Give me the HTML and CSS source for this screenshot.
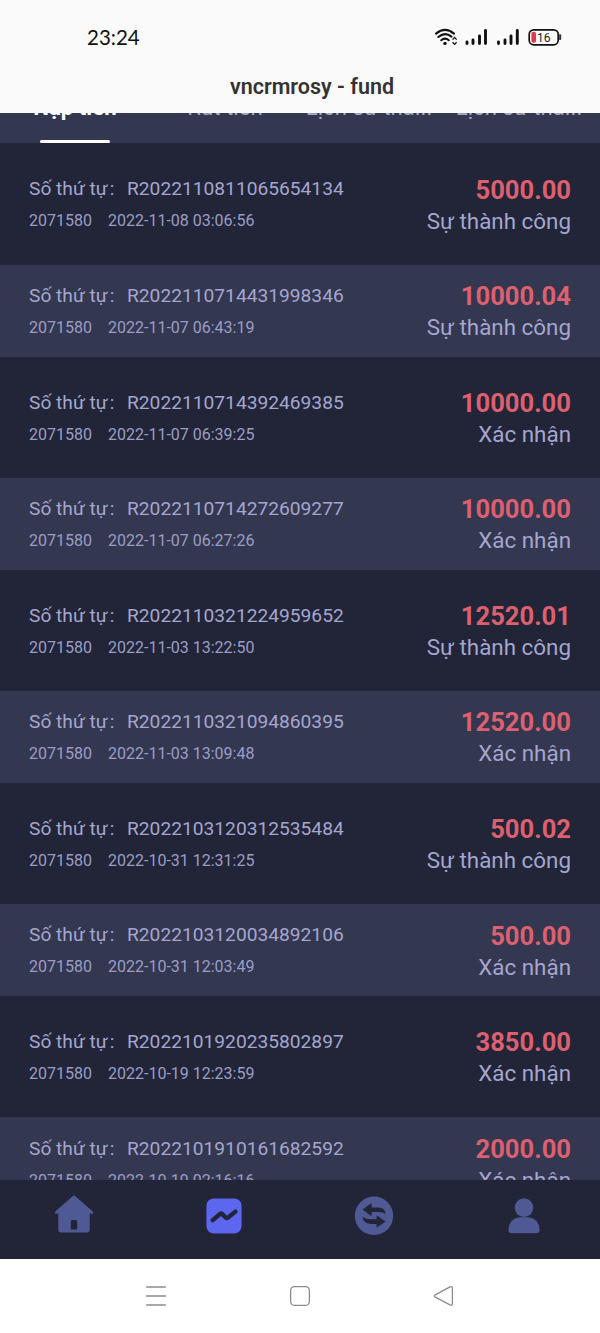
FILE: index.html
```
<!DOCTYPE html>
<html lang="vi">
<head>
  <meta charset="UTF-8">
  <title>vncrmrosy - fund</title>
  <link rel="stylesheet" href="styles.css">
</head>
<body>
<div class="header">
  <div class="status-bar">
    <span class="time">23:24</span>
    <svg class="status-icons" width="130" height="20" viewBox="0 0 130 20">
      <!-- wifi -->
      <g fill="none" stroke="#111" stroke-width="2.1" stroke-linecap="round">
        <path d="M2 5.6Q11-1.8 20 5.6"/>
        <path d="M4.3 9Q11 3.6 17.5 8.6"/>
        <path d="M7.2 12.2Q11 9.2 14.8 12.2"/>
      </g>
      <circle cx="11" cy="15.4" r="1.7" fill="#111"/>
      <path d="M18.6 11.6L20.6 9.4 22.6 11.6M18.6 14.2L20.6 16.4 22.6 14.2" fill="none" stroke="#111" stroke-width="1.3"/>
      <!-- signal -->
      <g stroke="#111" stroke-width="2.9" stroke-linecap="round">
        <path d="M33 14v1.5M39 12v3.5M45.5 8v7.5M51.5 2.5v13"/>
        <path d="M64.5 14v1.5M71 12v3.5M77 8v7.5M83.3 2.5v13"/>
      </g>
      <!-- battery -->
      <rect x="95.2" y="1.8" width="29" height="15" rx="4.6" fill="none" stroke="#111" stroke-width="1.7"/>
      <path d="M125.2 6.3h1q1 0 1 1v3.6q0 1-1 1h-1z" fill="#333"/>
      <rect x="97.4" y="3.8" width="4.6" height="11" rx="2" fill="#e2384d"/>
      <text x="103" y="13.6" class="battery-text">16</text>
    </svg>
  </div>
  <div class="title">vncrmrosy - fund</div>
</div>

<div class="content">
  <div class="tabs">
    <div class="tab active">Nạp tiền</div>
    <div class="tab">Rút tiền</div>
    <div class="tab">Lịch sử tha...</div>
    <div class="tab">Lịch sử tha...</div>
  </div>
  <div class="list">
    <div class="item">
      <div class="info">
        <div class="order"><span class="label">Số thứ tự<span class="colon">:</span></span>R2022110811065654134</div>
        <div class="meta"><span class="uid">2071580</span>2022-11-08 03:06:56</div>
      </div>
      <div class="result"><div class="amount">5000.00</div><div class="state">Sự thành công</div></div>
    </div>
    <div class="item">
      <div class="info">
        <div class="order"><span class="label">Số thứ tự<span class="colon">:</span></span>R2022110714431998346</div>
        <div class="meta"><span class="uid">2071580</span>2022-11-07 06:43:19</div>
      </div>
      <div class="result"><div class="amount">10000.04</div><div class="state">Sự thành công</div></div>
    </div>
    <div class="item">
      <div class="info">
        <div class="order"><span class="label">Số thứ tự<span class="colon">:</span></span>R2022110714392469385</div>
        <div class="meta"><span class="uid">2071580</span>2022-11-07 06:39:25</div>
      </div>
      <div class="result"><div class="amount">10000.00</div><div class="state">Xác nhận</div></div>
    </div>
    <div class="item">
      <div class="info">
        <div class="order"><span class="label">Số thứ tự<span class="colon">:</span></span>R2022110714272609277</div>
        <div class="meta"><span class="uid">2071580</span>2022-11-07 06:27:26</div>
      </div>
      <div class="result"><div class="amount">10000.00</div><div class="state">Xác nhận</div></div>
    </div>
    <div class="item">
      <div class="info">
        <div class="order"><span class="label">Số thứ tự<span class="colon">:</span></span>R2022110321224959652</div>
        <div class="meta"><span class="uid">2071580</span>2022-11-03 13:22:50</div>
      </div>
      <div class="result"><div class="amount">12520.01</div><div class="state">Sự thành công</div></div>
    </div>
    <div class="item">
      <div class="info">
        <div class="order"><span class="label">Số thứ tự<span class="colon">:</span></span>R2022110321094860395</div>
        <div class="meta"><span class="uid">2071580</span>2022-11-03 13:09:48</div>
      </div>
      <div class="result"><div class="amount">12520.00</div><div class="state">Xác nhận</div></div>
    </div>
    <div class="item">
      <div class="info">
        <div class="order"><span class="label">Số thứ tự<span class="colon">:</span></span>R2022103120312535484</div>
        <div class="meta"><span class="uid">2071580</span>2022-10-31 12:31:25</div>
      </div>
      <div class="result"><div class="amount">500.02</div><div class="state">Sự thành công</div></div>
    </div>
    <div class="item">
      <div class="info">
        <div class="order"><span class="label">Số thứ tự<span class="colon">:</span></span>R2022103120034892106</div>
        <div class="meta"><span class="uid">2071580</span>2022-10-31 12:03:49</div>
      </div>
      <div class="result"><div class="amount">500.00</div><div class="state">Xác nhận</div></div>
    </div>
    <div class="item">
      <div class="info">
        <div class="order"><span class="label">Số thứ tự<span class="colon">:</span></span>R2022101920235802897</div>
        <div class="meta"><span class="uid">2071580</span>2022-10-19 12:23:59</div>
      </div>
      <div class="result"><div class="amount">3850.00</div><div class="state">Xác nhận</div></div>
    </div>
    <div class="item">
      <div class="info">
        <div class="order"><span class="label">Số thứ tự<span class="colon">:</span></span>R2022101910161682592</div>
        <div class="meta"><span class="uid">2071580</span>2022-10-19 02:16:16</div>
      </div>
      <div class="result"><div class="amount">2000.00</div><div class="state">Xác nhận</div></div>
    </div>
  </div>
</div>

<div class="nav">
  <a class="nav-item">
    <svg width="40" height="40" viewBox="0 0 40 40">
      <path fill="#4f5a94" fill-rule="evenodd" d="M18.6 1.2Q20 0 21.4 1.2L38.7 16.4Q40 18.6 37.6 18.8H35.7V34.5Q35.7 37.6 32.6 37.6H7.4Q4.3 37.6 4.3 34.5V18.8H2.4Q0 18.6 1.3 16.4ZM18.3 25Q16.8 25 16.8 26.5V34.6H23.2V26.5Q23.2 25 21.7 25Z"/>
    </svg>
  </a>
  <a class="nav-item">
    <svg width="40" height="40" viewBox="0 0 40 40">
      <rect x="2.4" y="3.4" width="35.2" height="35" rx="7.5" fill="#5c66ef"/>
      <path d="M8.7 25.1L16 19Q17.2 18 18.3 19.1L21.6 22.5Q22.8 23.6 24 22.6L31.4 16.6" fill="none" stroke="#212537" stroke-width="4.4" stroke-linecap="round"/>
    </svg>
  </a>
  <a class="nav-item">
    <svg width="40" height="40" viewBox="0 0 40 40">
      <circle cx="20" cy="20.8" r="19.2" fill="#4f5a94"/>
      <path fill="#212537" d="M8.6 14.5L17.6 8V12.4H24.5Q31.2 12.8 31.6 18.9Q28.5 17 24.5 17H17.6V21.2ZM31.6 26.4L22.6 32.8V28.9H16.5Q9 28.5 8.6 21.8Q12 24.3 16.5 24.3H22.6V20.2Z"/>
    </svg>
  </a>
  <a class="nav-item">
    <svg width="40" height="40" viewBox="0 0 40 40">
      <circle cx="20" cy="12.6" r="9.3" fill="#4f5a94"/>
      <path fill="#4f5a94" d="M16 22.3H24Q34.6 23.2 35.6 34.6Q35.8 38.3 32.4 38.3H7.6Q4.2 38.3 4.4 34.6Q5.4 23.2 16 22.3Z"/>
    </svg>
  </a>
</div>

<div class="system-bar">
  <svg width="24" height="24" viewBox="0 0 24 24"><path d="M2.2 3H21.8M2.2 12H21.8M2.2 21H21.8"/></svg>
  <svg width="24" height="24" viewBox="0 0 24 24"><rect x="2.6" y="2.6" width="18.8" height="18.8" rx="4"/></svg>
  <svg width="24" height="24" viewBox="0 0 24 24"><path d="M3.2 10.9L18 2.9Q20.4 2 20.4 4.3V19.5Q20.4 21.9 18 20.9L3.2 13.1Q1.4 12 3.2 10.9Z"/></svg>
</div>
</body>
</html>
```
FILE: styles.css
```
* {
  box-sizing: border-box;
}

body {
  margin: 0;
  height: 1333px;
  display: flex;
  flex-direction: column;
  overflow: hidden;
  font-family: Roboto, "Noto Sans", sans-serif;
  background: #212537;
}

.header {
  height: 113px;
  flex: none;
  background: #fafafa;
}

.status-bar {
  height: 62px;
  padding: 14px 36px 0 87px;
  display: flex;
  align-items: center;
  justify-content: space-between;
}

.time {
  margin-top: -2px;
  font-family: Lato, sans-serif;
  font-size: 20.5px;
  color: #111;
}

.battery-text {
  font-size: 12px;
  fill: #222;
}

.title {
  padding-left: 24px;
  text-align: center;
  font-size: 21.5px;
  line-height: 50px;
  font-weight: 600;
  color: #333;
}

.content {
  flex: 1;
  min-height: 0;
  overflow: hidden;
}

/* tab bar, scrolled partly under the header */
.tabs {
  height: 80px;
  margin-top: -50px;
  display: flex;
  background: #343750;
}

.tab {
  width: 150px;
  padding: 29px 7px 0;
  text-align: center;
  font-size: 22.2px;
  line-height: 30px;
  white-space: nowrap;
  color: #a9abc4;
}

.tab:nth-child(n+3) {
  padding-left: 0;
  padding-right: 12px;
}

.tab.active {
  display: flex;
  flex-direction: column;
  align-items: center;
  justify-content: space-between;
  font-weight: bold;
  color: #fff;
}

.tab.active::after {
  content: "";
  width: 70px;
  height: 3px;
  border-radius: 2px;
  background: #fff;
}

.list {
  padding-top: 15px;
}

.item {
  height: 92.4px;
  margin-bottom: 14.2px;
  padding: 0 29px;
  display: flex;
  justify-content: space-between;
  color: #a5a6cf;
}

.item:nth-child(even) {
  background: #343750;
}

.order {
  margin-top: 16.4px;
  font-size: 19.2px;
  line-height: 30px;
}

.label {
  display: inline-block;
  width: 98px;
}

.colon {
  margin-left: 2px;
}

.meta {
  font-size: 16px;
  line-height: 33.6px;
  color: #9c9dc6;
}

.uid {
  display: inline-block;
  width: 79px;
}

.result {
  text-align: right;
}

.amount {
  margin-top: 16.5px;
  font-size: 25.6px;
  line-height: 30px;
  font-weight: bold;
  color: #dc606f;
}

.state {
  font-size: 22.4px;
  line-height: 33px;
}

.nav {
  height: 79px;
  flex: none;
  padding-top: 14.6px;
  display: flex;
  background: #212537;
}

.nav-item {
  width: 150px;
  padding-right: 1.4px;
  text-align: center;
}

.system-bar {
  height: 74px;
  flex: none;
  display: flex;
  align-items: center;
  justify-content: center;
  gap: 120px;
  background: #fff;
}

.system-bar svg {
  fill: none;
  stroke: #8c8c8c;
  stroke-width: 1.3;
}
```
